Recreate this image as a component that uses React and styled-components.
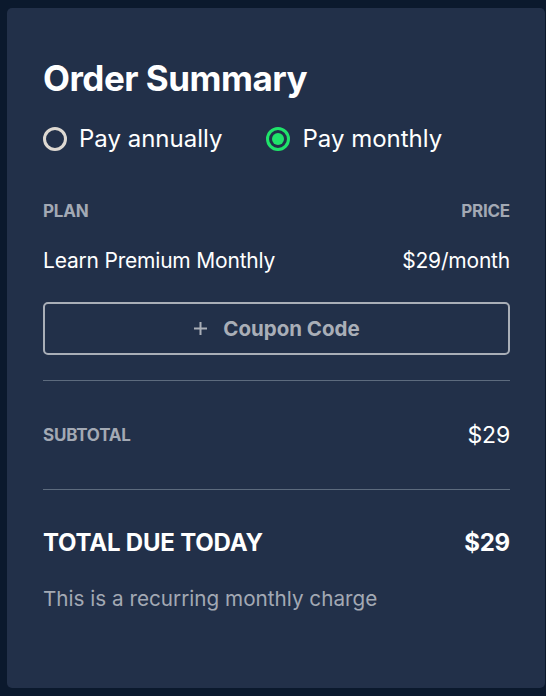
import React, { useState } from "react";
import styled, { createGlobalStyle } from "styled-components";

const GlobalStyle = createGlobalStyle`
  html, body {
    margin: 0;
    padding: 0;
    background: #0b192d;
  }
  body {
    font-family: Inter, "Noto Sans", sans-serif;
    -webkit-font-smoothing: antialiased;
  }
`;

const Page = styled.div`
  padding: 8px 1px 8px 7px;
`;

const Card = styled.section`
  box-sizing: border-box;
  width: 538px;
  height: 680px;
  background: #223049;
  border-radius: 5px;
  padding: 48px 35px 0 36px;
  display: flex;
  flex-direction: column;
  color: #ffffff;
`;

const Title = styled.h1`
  margin: 0;
  font-size: 35px;
  line-height: 44px;
  font-weight: 700;
  letter-spacing: -0.5px;
`;

const RadioGroup = styled.div`
  display: flex;
  gap: 44px;
  margin-top: 25px;
`;

const RadioLabel = styled.label`
  display: flex;
  align-items: center;
  gap: 12px;
  font-size: 24px;
  line-height: 28px;
  cursor: pointer;
`;

const RadioCircle = styled.span`
  box-sizing: border-box;
  width: 24px;
  height: 24px;
  border-radius: 50%;
  border: 3px solid ${(p) => (p.$checked ? "#1fe36a" : "#ded9d2")};
  display: flex;
  align-items: center;
  justify-content: center;
  &::after {
    content: "";
    width: 12px;
    height: 12px;
    border-radius: 50%;
    background: #1fe36a;
    display: ${(p) => (p.$checked ? "block" : "none")};
  }
`;

const Row = styled.div`
  display: flex;
  justify-content: space-between;
  align-items: center;
  margin-top: ${(p) => p.$mt || 0}px;
`;

const Label = styled.span`
  font-size: 17px;
  line-height: 20px;
  font-weight: 700;
  color: #a3a9b4;
  text-transform: uppercase;
  letter-spacing: -0.2px;
`;

const Text = styled.span`
  font-size: ${(p) => p.$size || 21}px;
  line-height: ${(p) => p.$lh || 26}px;
  font-weight: ${(p) => (p.$bold ? 700 : 400)};
  color: ${(p) => (p.$muted ? "#a3a9b4" : "#ffffff")};
  letter-spacing: -0.2px;
`;

const CouponButton = styled.button`
  box-sizing: border-box;
  margin-top: 28px;
  height: 53px;
  width: 100%;
  background: transparent;
  border: 2px solid #a9aeb7;
  border-radius: 5px;
  display: flex;
  align-items: center;
  justify-content: center;
  gap: 15px;
  color: #a9aeb7;
  font-family: inherit;
  font-size: 20.5px;
  font-weight: 700;
  cursor: pointer;
`;

const Divider = styled.hr`
  margin: ${(p) => p.$mt || 0}px 0 0;
  border: none;
  border-top: 1px solid #5d6b7e;
  width: 100%;
`;

const Section = styled.div`
  padding: 40px 0;
  display: flex;
  flex-direction: column;
`;

const Note = styled.p`
  margin: 30px 0 0;
  font-size: 20.7px;
  line-height: 24px;
  color: #a3a9b4;
`;

export default function App() {
  const [plan, setPlan] = useState("monthly");
  return (
    <>
      <GlobalStyle />
      <Page>
        <Card>
          <Title>Order Summary</Title>
          <RadioGroup>
            <RadioLabel onClick={() => setPlan("annual")}>
              <RadioCircle $checked={plan === "annual"} />
              Pay annually
            </RadioLabel>
            <RadioLabel onClick={() => setPlan("monthly")}>
              <RadioCircle $checked={plan === "monthly"} />
              Pay monthly
            </RadioLabel>
          </RadioGroup>
          <Row $mt={48}>
            <Label>Plan</Label>
            <Label>Price</Label>
          </Row>
          <Row $mt={27}>
            <Text>Learn Premium Monthly</Text>
            <Text>$29/month</Text>
          </Row>
          <CouponButton>
            <svg width="15" height="15" viewBox="0 0 15 15">
              <path d="M7.5 1v13M1 7.5h13" stroke="#a9aeb7" strokeWidth="2" />
            </svg>
            Coupon Code
          </CouponButton>
          <Divider $mt={25} />
          <Section>
            <Row>
              <Label>Subtotal</Label>
              <Text $size={23} $lh={28}>$29</Text>
            </Row>
          </Section>
          <Divider />
          <Row $mt={39}>
            <Text $size={24} $lh={28} $bold>TOTAL DUE TODAY</Text>
            <Text $size={24} $lh={28} $bold>$29</Text>
          </Row>
          <Note>This is a recurring monthly charge</Note>
        </Card>
      </Page>
    </>
  );
}
